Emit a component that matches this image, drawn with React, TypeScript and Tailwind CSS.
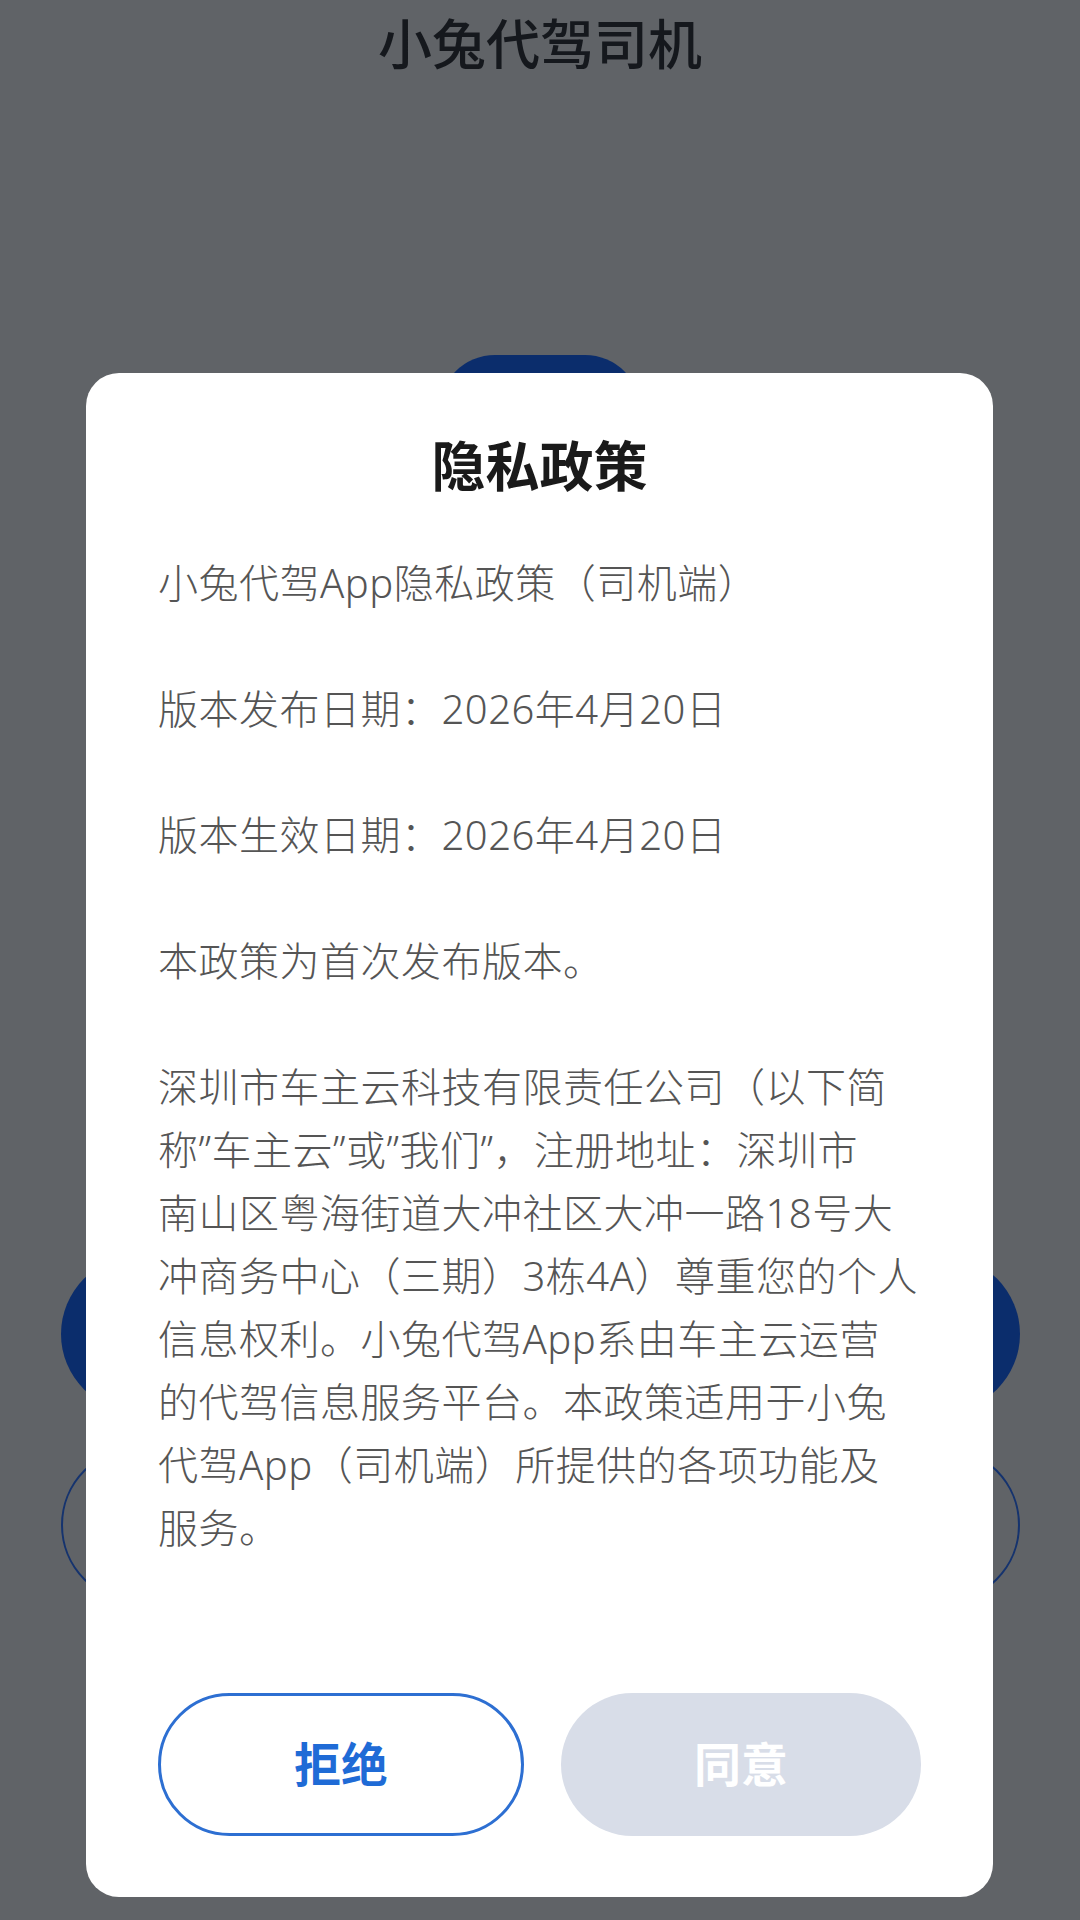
const sans = "font-['Noto_Sans','Noto_Sans_CJK_SC',sans-serif]";

const paragraphs: string[][] = [
  ["小兔代驾App隐私政策（司机端）"],
  ["版本发布日期：2026年4月20日"],
  ["版本生效日期：2026年4月20日"],
  ["本政策为首次发布版本。"],
  [
    "深圳市车主云科技有限责任公司（以下简",
    "称”车主云”或”我们”，注册地址：深圳市",
    "南山区粤海街道大冲社区大冲一路18号大",
    "冲商务中心（三期）3栋4A）尊重您的个人",
    "信息权利。小兔代驾App系由车主云运营",
    "的代驾信息服务平台。本政策适用于小兔",
    "代驾App（司机端）所提供的各项功能及",
    "服务。",
  ],
];

function PrivacyDialog() {
  return (
    <div className="absolute left-[86px] top-[373px] flex h-[1524px] w-[907px] flex-col rounded-[33px] bg-white px-[72px] pt-[58px] pb-[61px]">
      <h2 className="text-center text-[54px] leading-[70px] font-semibold text-[#1a1a1a]">隐私政策</h2>
      <div className="mt-[50px] h-[1082px] overflow-hidden text-[40px] leading-[63px] font-light tracking-[0.5px] text-[#555555]">
        {paragraphs.map((lines, i) => (
          <p key={i} className="mb-[63px]">
            {lines.map((line) => (
              <span key={line} className="block whitespace-nowrap">
                {line}
              </span>
            ))}
          </p>
        ))}
      </div>
      <div className="mt-[60px] flex gap-[37px]">
        <button className="flex h-[143px] flex-1 items-center justify-center rounded-full border-[3px] border-[#2d6fd2] bg-white text-[47px] font-bold text-[#1f6bd6]">
          拒绝
        </button>
        <button className="flex h-[143px] flex-1 items-center justify-center rounded-full bg-[#d8dde8] text-[47px] font-bold text-white">
          同意
        </button>
      </div>
    </div>
  );
}

export default function App() {
  return (
    <div className={`relative h-[1920px] w-[1080px] overflow-hidden bg-[#606367] ${sans}`}>
      {/* page under the mask */}
      <div className="flex flex-col items-center pt-[12px]">
        <h1 className="text-[54px] leading-[64px] font-medium text-[#15181d]">小兔代驾司机</h1>
        <div className="mt-[279px] h-[202px] w-[202px] rounded-[56px] bg-[#0b2d6c]" />
        <div className="mt-[699px] h-[156px] w-[959px] rounded-full bg-[#0b2d6c]" />
        <div className="mt-[35px] h-[156px] w-[959px] rounded-full border-2 border-[#15336e]" />
      </div>
      <PrivacyDialog />
    </div>
  );
}
